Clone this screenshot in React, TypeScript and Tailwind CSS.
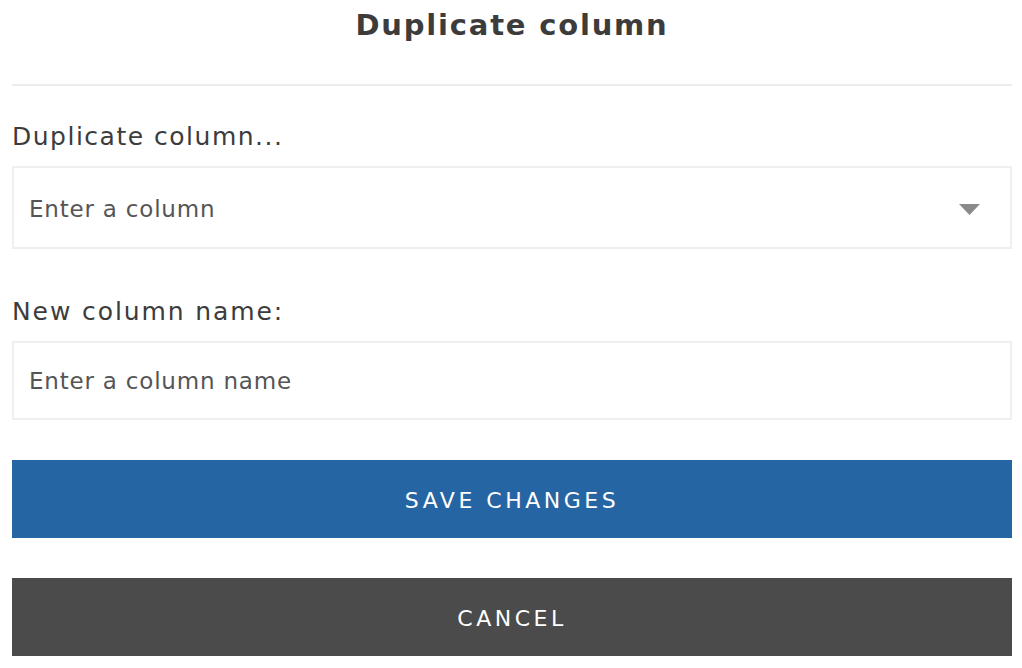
import React from "react";

export default function App() {
  const font = { fontFamily: '"DejaVu Sans", "Open Sans", sans-serif' };
  return (
    <div className="w-[1022px] h-[668px] bg-white overflow-hidden" style={font}>
      <div className="pl-3 pr-[10px]">
        <div className="h-[86px] border-b-2 border-[#ececec] flex justify-center pt-[5px]">
          <h1 className="text-[29px] leading-[40px] font-bold text-[#3c3c3c] tracking-[1.8px]">Duplicate column</h1>
        </div>
        <div className="pt-[35px]">
          <label className="block text-[25px] leading-[32px] text-[#3c3c3c] tracking-[1.5px]">Duplicate column...</label>
          <div className="mt-[13px] h-[83px] border-2 border-[#efefef] flex items-center justify-between pl-[15px] pr-[30px] pt-[3px]">
            <span className="text-[23px] text-[#555555] tracking-[0.8px]">Enter a column</span>
            <svg width="21" height="11" viewBox="0 0 21 11">
              <polygon points="0,0 21,0 10.5,11" fill="#8a8a8a" />
            </svg>
          </div>
        </div>
        <div className="pt-[47px]">
          <label className="block text-[25px] leading-[32px] text-[#3c3c3c] tracking-[1.9px]">New column name:</label>
          <div className="mt-[13px] h-[79px] border-2 border-[#efefef] flex items-center pl-[15px] pt-[2px]">
            <span className="text-[23px] text-[#555555] tracking-[0.8px]">Enter a column name</span>
          </div>
        </div>
        <button className="mt-[40px] w-full h-[78px] bg-[#2565a3] text-white text-[22px] tracking-[3.5px] flex items-center justify-center pt-[3px]">
          SAVE CHANGES
        </button>
        <button className="mt-[40px] w-full h-[78px] bg-[#4b4b4b] text-white text-[22px] tracking-[3.5px] flex items-center justify-center pt-[2px]">
          CANCEL
        </button>
      </div>
    </div>
  );
}
